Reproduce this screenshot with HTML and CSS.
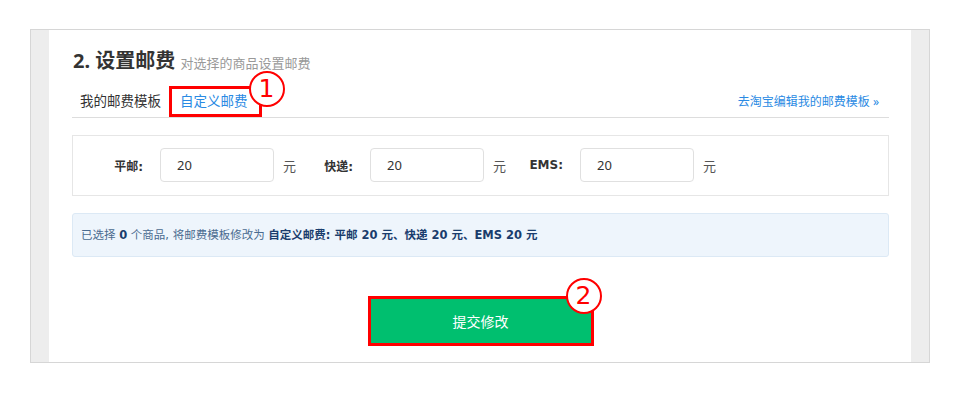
FILE: index.html
```html
<!DOCTYPE html>
<html lang="zh-CN">
<head>
  <meta charset="UTF-8">
  <title>设置邮费</title>
  <link rel="stylesheet" href="styles.css">
</head>
<body>
  <div class="frame">
    <div class="panel">
      <h2 class="title">2. 设置邮费 <small>对选择的商品设置邮费</small></h2>

      <div class="tabs">
        <span class="tab">我的邮费模板</span>
        <span class="tab active">自定义邮费<i class="mark mark-1">1</i></span>
        <a class="tabs-link" href="#">去淘宝编辑我的邮费模板 »</a>
      </div>

      <form class="fee-form">
        <label class="fee">
          <span class="fee-name">平邮:</span>
          <input type="text" value="20">
          <span class="unit">元</span>
        </label>
        <label class="fee">
          <span class="fee-name">快递:</span>
          <input type="text" value="20">
          <span class="unit">元</span>
        </label>
        <label class="fee">
          <span class="fee-name">EMS:</span>
          <input type="text" value="20">
          <span class="unit">元</span>
        </label>
      </form>

      <div class="notice">
        已选择 <b>0</b> 个商品, 将邮费模板修改为 <b>自定义邮费: 平邮 20 元、快递 20 元、EMS 20 元</b>
      </div>

      <div class="actions">
        <span class="highlight">
          <button type="button" class="submit">提交修改</button>
          <i class="mark mark-2">2</i>
        </span>
      </div>
    </div>
  </div>
</body>
</html>
```

FILE: styles.css
```css
body {
  margin: 0;
  background: #fff;
  font-family: "Noto Sans", "Noto Sans CJK SC", sans-serif;
  color: #333;
}

.frame {
  width: 862px;
  margin: 29px 0 0 30px;
  padding: 0 18px;
  border: 1px solid #d6d6d6;
  background: #ededed;
}

.panel {
  background: #fff;
  padding: 17px 22px 16px 23px;
}

.title {
  height: 28px;
  margin: 0;
  padding-left: 1px;
  font-size: 20px;
  line-height: 28px;
  font-weight: bold;
  color: #333;
}

.title small {
  font-size: 13px;
  line-height: 1;
  font-weight: normal;
  color: #999;
}

/* tabs */
.tabs {
  display: flex;
  align-items: flex-end;
  height: 42px;
  border-bottom: 1px solid #ddd;
}

.tab {
  position: relative;
  padding: 0 8px;
  font-size: 13.5px;
  line-height: 31px;
  color: #333;
}

.tab.active {
  padding: 0 11px;
  color: #2a8ae3;
}

.tab.active::after {
  content: "";
  position: absolute;
  top: 0;
  left: 0;
  right: -3px;
  bottom: 0;
  border: 3px solid #f00;
}

.tabs-link {
  margin-left: auto;
  padding-right: 10px;
  font-size: 12px;
  line-height: 31px;
  color: #2a8ae3;
  text-decoration: none;
}

/* numbered annotation */
.mark {
  position: absolute;
  z-index: 2;
  width: 32px;
  height: 32px;
  border: 2.5px solid #f00;
  border-radius: 50%;
  background: #fff;
  color: #f00;
  font-style: normal;
  font-family: "DejaVu Sans", sans-serif;
  font-size: 25px;
  line-height: 32px;
  text-align: center;
}

.mark-1 {
  top: -15px;
  right: -26px;
}

.mark-2 {
  top: -21px;
  right: -11px;
}

/* fee inputs */
.fee-form {
  display: flex;
  margin: 17px 0 0;
  padding: 12px 0 13px 17px;
  border: 1px solid #e6e6e6;
}

.fee {
  display: flex;
  align-items: center;
  margin-right: 4px;
}

.fee-name {
  width: 53px;
  padding-right: 17px;
  text-align: right;
  font-family: "DejaVu Sans", "Noto Sans CJK SC", sans-serif;
  font-size: 12px;
  font-weight: bold;
  color: #333;
}

.fee input {
  box-sizing: border-box;
  width: 114px;
  height: 34px;
  padding: 0 16px;
  border: 1px solid #e0e0e0;
  border-radius: 4px;
  font-family: "Noto Sans", sans-serif;
  font-size: 13px;
  color: #333;
}

.unit {
  width: 13px;
  margin-left: 9px;
  font-size: 13px;
  color: #555;
}

/* info */
.notice {
  margin-top: 17px;
  padding: 0 8px;
  height: 42px;
  line-height: 42px;
  border: 1px solid #dce9f5;
  border-radius: 3px;
  background: #eef5fc;
  font-family: "DejaVu Sans", "Noto Sans CJK SC", sans-serif;
  font-size: 11.5px;
  color: #4a6b8f;
}

.notice b {
  color: #1a3d6d;
}

/* submit */
.actions {
  display: flex;
  justify-content: center;
  margin-top: 39px;
}

.highlight {
  position: relative;
  display: block;
  border: 3px solid #f00;
}

.submit {
  display: block;
  width: 220px;
  height: 44px;
  border: 0;
  background: #00bf6f;
  color: #fff;
  font-family: "Noto Sans CJK SC", sans-serif;
  font-size: 14px;
  cursor: pointer;
}
```
